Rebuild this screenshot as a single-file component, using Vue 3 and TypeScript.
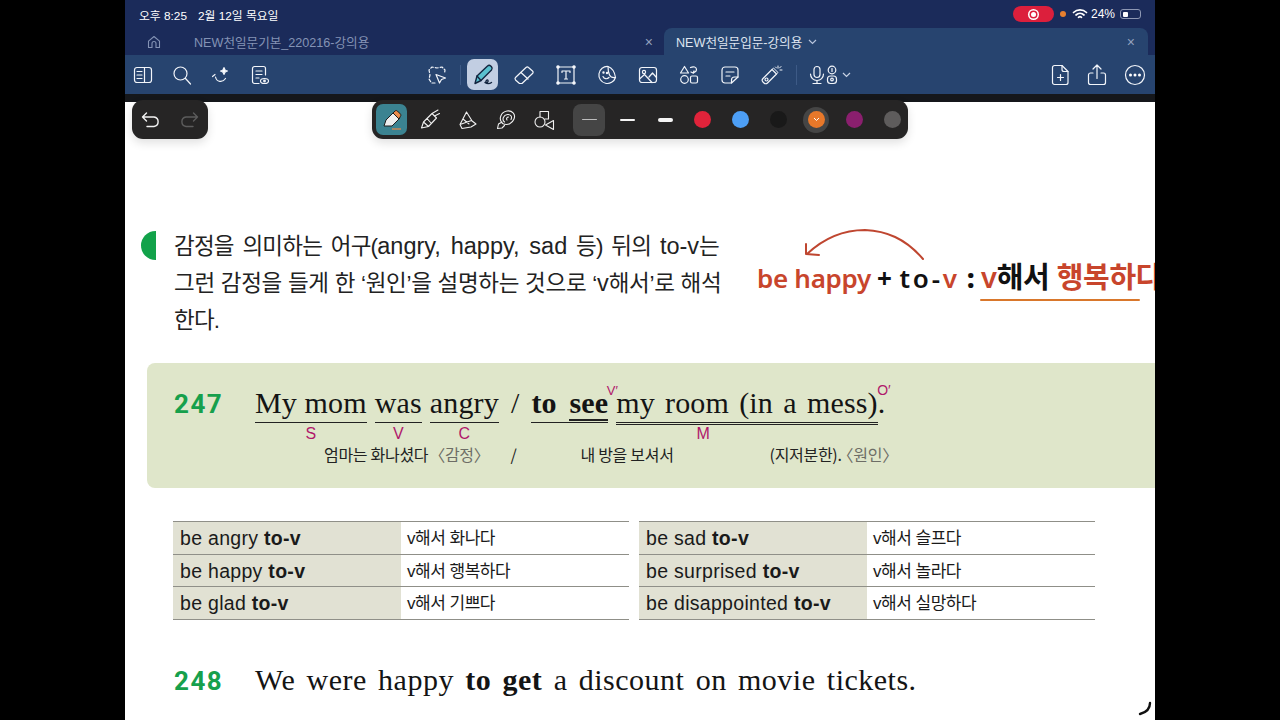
<script setup lang="ts">
interface TableRow {
  phrase: string;
  meaning: string;
}

const leftRows: TableRow[] = [
  { phrase: 'be angry', meaning: 'v해서 화나다' },
  { phrase: 'be happy', meaning: 'v해서 행복하다' },
  { phrase: 'be glad', meaning: 'v해서 기쁘다' },
];

const rightRows: TableRow[] = [
  { phrase: 'be sad', meaning: 'v해서 슬프다' },
  { phrase: 'be surprised', meaning: 'v해서 놀라다' },
  { phrase: 'be disappointed', meaning: 'v해서 실망하다' },
];

const tables = [leftRows, rightRows];
const colors = ['#e0233a', '#4d9ff6', '#191919', '#e8782a', '#8a1f6e', '#5e5c5c'];
</script>

<template>
  <div class="stage">
    <header class="chrome">
      <div class="status">
        <div class="status__time"><span>오후 8:25</span><span>2월 12일 목요일</span></div>
        <div class="status__right">
          <span class="rec"><span class="rec__dot"></span></span>
          <span class="orange-dot"></span>
          <svg width="16" height="12" viewBox="0 0 16 12" fill="none" stroke="#fff" stroke-width="1.7" stroke-linecap="round">
            <path d="M1.5 4.5a9.5 9.5 0 0 1 13 0" />
            <path d="M4 7a6 6 0 0 1 8 0" />
            <path d="M6.5 9.3a2.4 2.4 0 0 1 3 0" />
          </svg>
          <span class="status__pct">24%</span>
          <span class="battery"><span class="battery__fill"></span></span>
        </div>
      </div>

      <div class="tabs">
        <div class="tabs__home">
          <svg width="14" height="14" viewBox="0 0 14 14" fill="none" stroke="#8493b5" stroke-width="1.1">
            <path d="M1.5 6.2 7 1.5l5.500 4.700V12.500H9V8.500a2 2 0 0 0-4 0v4H1.500z" stroke-linejoin="round" />
          </svg>
        </div>
        <div class="tab tab--idle">
          <span>NEW천일문기본_220216-강의용</span>
          <span class="tab__close">×</span>
        </div>
        <div class="tab tab--active">
          <span>NEW천일문입문-강의용</span>
          <svg class="tab__chevron" width="9" height="6" viewBox="0 0 9 6" fill="none" stroke="#b8c4dc" stroke-width="1.2"><path d="m1 1 3.500 3.500L8 1" /></svg>
          <span class="tab__close tab__close--end">×</span>
        </div>
      </div>

      <div class="toolbar">
        <div class="toolbar__group toolbar__group--left">
          <svg width="20" height="20" viewBox="0 0 20 20" class="ic"><rect x="1.500" y="2.500" width="17" height="15" rx="2.500" /><path d="M11.500 2.500v15M4 6.500h5M4 10h5M4 13.500h5" /></svg>
          <svg width="20" height="20" viewBox="0 0 20 20" class="ic"><circle cx="8.500" cy="8.500" r="6.500" /><path d="m13.500 13.500 5 5.500" /></svg>
          <svg width="20" height="20" viewBox="0 0 20 20" class="ic"><path d="M1.500 11.500 4 9.500m.5 2.500c1 5 7 6 10 1.500" /><path d="M13 2.500c.4 2.300 1.200 3.100 3.500 3.500-2.300.4-3.100 1.200-3.500 3.500-.4-2.300-1.200-3.100-3.500-3.500 2.300-.4 3.100-1.200 3.500-3.500z" fill="#fff" /></svg>
          <svg width="20" height="20" viewBox="0 0 20 20" class="ic"><path d="M9 18.500H4.500a2 2 0 0 1-2-2v-13a2 2 0 0 1 2-2h9a2 2 0 0 1 2 2V10" /><path d="M6 6h6M6 9.500h6M6 13h3" /><ellipse cx="14.500" cy="16" rx="4" ry="2.500" /><circle cx="14.500" cy="16" r=".8" fill="#fff" /></svg>
        </div>

        <div class="toolbar__group toolbar__group--center">
          <svg width="20" height="20" viewBox="0 0 20 20" class="ic"><path d="M8 18H4.500L2 14l1-4-1-5 3-3 5 1 5-1 3 3-.5 3.500" stroke-dasharray="3 2" /><path d="m9 9.500 9.500 3.500-4 1.500-2 3.500z" /></svg>
          <span class="divider"></span>
          <span class="pen-btn">
            <svg width="24" height="24" viewBox="0 0 24 24" fill="none" stroke="#14253f" stroke-width="1.400" stroke-linejoin="round" stroke-linecap="round">
              <path d="M4 20.500 6 13 16.500 3c1-1 2.200-1 3.200 0l.8.800c.9 1 .9 2.200 0 3.200L10 17.500z" fill="#5bc1cf" />
              <path d="M6 13l4 4.500M14 19.500c1.500 1.500 3.500-.5 3-2-.6-1.500-2.500 0-2 2 .5 1.500 3.500 1.500 5.500 0" />
            </svg>
          </span>
          <svg width="22" height="20" viewBox="0 0 22 20" class="ic"><path d="M2.500 12.500 13 2.500c.8-.7 1.800-.7 2.500 0l4 3.500c.8.800.8 1.800 0 2.500L9 18.500H6.500L2.500 15c-.6-.8-.6-1.800 0-2.500z" /><path d="m8 7.500 7 6.500" /></svg>
          <svg width="20" height="20" viewBox="0 0 20 20" class="ic"><rect x="2" y="2" width="16" height="16" /><path d="M6 6h8M6 6v1.500M14 6v1.500M10 6v8M8.500 14h3" /><g fill="#fff"><circle cx="2" cy="2" r="1.200" /><circle cx="18" cy="2" r="1.200" /><circle cx="2" cy="18" r="1.200" /><circle cx="18" cy="18" r="1.200" /></g></svg>
          <svg width="20" height="20" viewBox="0 0 20 20" class="ic"><path d="M11 1.500a8.500 8.500 0 1 0 7.500 11c-3.500.5-5-.5-6-2.500s-1.500-5-1.500-8.500z" /><path d="M11 1.500c3 1 6.500 4.500 7.500 11" /><path d="M6 11.500c1 2.500 4 3 6 1" /><circle cx="6.500" cy="7.500" r=".6" fill="#fff" /><circle cx="10" cy="8" r=".6" fill="#fff" /></svg>
          <svg width="20" height="20" viewBox="0 0 20 20" class="ic"><rect x="1.500" y="2.500" width="17" height="15" rx="2.500" /><circle cx="6" cy="7" r="1.600" /><path d="m1.500 14 5-4.500 7.500 8M11 12l3.500-4 4 4.500" /></svg>
          <svg width="20" height="20" viewBox="0 0 20 20" class="ic"><path d="m5.500 1.500 4 6.500h-8zM11.500 2.500c3-1.500 6-.5 6 2s-2 2.500-3 3.500M15 6l-1 2-2-1" /><circle cx="5.500" cy="14.500" r="3.800" /><rect x="11.500" y="11" width="7" height="7" rx="1.500" /></svg>
          <svg width="20" height="20" viewBox="0 0 20 20" class="ic"><path d="M11.500 18H5a3 3 0 0 1-3-3V5a3 3 0 0 1 3-3h10a3 3 0 0 1 3 3v7z" /><path d="M6 7h8M6 11h4M18 12h-3.500a3 3 0 0 0-3 3v3" /></svg>
          <svg width="22" height="20" viewBox="0 0 22 20" class="ic"><path d="m2 13.500 9-9 4.500 4.500-9 9c-1 1-2.500 1-3.500 0l-1-1c-1-1-1-2.500 0-3.500z" /><circle cx="5.500" cy="14.500" r="1.500" /><path d="m11 4.500 1.500-1.500 4.500 4.500L15.500 9M17 1v2M20 1.500l-1.500 1.500M21 5h-2M14.500 2l1 1" stroke-width="1" /></svg>
          <span class="divider"></span>
          <span class="mic">
            <svg width="30" height="20" viewBox="0 0 30 20" class="ic"><rect x="5" y="1.500" width="6" height="11" rx="3" /><path d="M1.500 9a6.500 6.500 0 0 0 13 0M8 15.500V18M4 18.500h8" /><circle cx="23" cy="5" r="3.800" /><path d="M23 3.500v3" /><rect x="18.500" y="11" width="9" height="7.500" rx="3" /><circle cx="23" cy="14.500" r="1.300" /></svg>
            <svg width="9" height="6" viewBox="0 0 9 6" fill="none" stroke="#c8d2e4" stroke-width="1.200"><path d="m1 1 3.500 3.500L8 1" /></svg>
          </span>
        </div>

        <div class="toolbar__group toolbar__group--right">
          <svg width="20" height="22" viewBox="0 0 20 22" class="ic"><path d="M4.500 1.500H12l6 6v11a2 2 0 0 1-2 2H4.500a2 2 0 0 1-2-2v-15a2 2 0 0 1 2-2z" /><path d="M12 1.500v4a2 2 0 0 0 2 2h4M10.500 10.500v6M7.500 13.500h6" /></svg>
          <svg width="20" height="22" viewBox="0 0 20 22" class="ic"><path d="M6 9H3.500a2 2 0 0 0-2 2v7.500a2 2 0 0 0 2 2h13a2 2 0 0 0 2-2V11a2 2 0 0 0-2-2H14M10 14.500V1.500M6 5l4-4 4 4" /></svg>
          <svg width="22" height="22" viewBox="0 0 22 22" class="ic"><circle cx="11" cy="11" r="9.500" /><g fill="#fff" stroke="none"><circle cx="6.500" cy="11" r="1.500" /><circle cx="11" cy="11" r="1.500" /><circle cx="15.500" cy="11" r="1.500" /></g></svg>
        </div>
      </div>
      <div class="band"></div>
    </header>

    <main class="page">
      <div class="float float--history">
        <svg width="20" height="16" viewBox="0 0 20 16" fill="none" stroke="#f2f2f2" stroke-width="1.400" stroke-linecap="round" stroke-linejoin="round"><path d="M5.500 1 1.500 5l4 4M1.500 5H13a4.800 4.800 0 0 1 0 9.500H6" /></svg>
        <svg width="20" height="16" viewBox="0 0 20 16" fill="none" stroke="#5c5c5c" stroke-width="1.400" stroke-linecap="round" stroke-linejoin="round"><path d="m14.500 1 4 4-4 4M18.500 5H7a4.800 4.800 0 0 0 0 9.500h7" /></svg>
      </div>

      <div class="float float--tools">
        <span class="tool tool--active">
          <svg width="24" height="24" viewBox="0 0 24 24" fill="none" stroke="#1c1c1c" stroke-width="1" stroke-linejoin="round">
            <path d="m4 18 2-6 8-8 6 6-8 8z" fill="#eee" />
            <path d="m14 4 2-2c.8-.6 1.700-.6 2.400 0l3 3c.6.7.6 1.600 0 2.400L20 10z" transform="translate(-1 1)" fill="#e98a4a" />
            <path d="M12 21h9" stroke="#e98a4a" stroke-width="1.200" />
          </svg>
        </span>
        <span class="tool">
          <svg width="22" height="22" viewBox="0 0 22 22" class="ic-w"><path d="m2.500 19 2-6L13 4.500l4.500 4.500-8 8.500zM4.500 13l5 4.500M8 9.500l4 4.500M13 4.500 19 1M15.500 7l5-2.500" /></svg>
        </span>
        <span class="tool">
          <svg width="22" height="22" viewBox="0 0 22 22" class="ic-w"><path d="M3 15.500 9.500 3M9.500 3l5 8M3 15.500l2 4 9-1.500 5-3-4.500-3.500zM6 10l6 5" /></svg>
        </span>
        <span class="tool">
          <svg width="22" height="22" viewBox="0 0 22 22" class="ic-w"><path d="m7 13-3.500 2-1 4.500 4.500-.5 2.500-2.500" /><path d="M7.500 14.500C3 10 6 3 12 2c5-.8 9 3 7 8-1.500 4-6 7-11.500 4.500z" /><path d="M9.500 13c-3-2.500-1-7 3-7.500 3-.3 5 2 3.500 5M12 11c-1-1.500 0-3 1.500-3" /></svg>
        </span>
        <span class="tool tool--last">
          <svg width="22" height="22" viewBox="0 0 22 22" class="ic-w"><circle cx="7" cy="13" r="5" /><path d="M7 8V2.500h8.500V10H12" /><path d="m20.500 11.500-8 4.500 8 4.500z" /></svg>
        </span>
        <span class="dash dash--active"><i class="dash__line dash__line--thin"></i></span>
        <span class="dash"><i class="dash__line dash__line--mid"></i></span>
        <span class="dash dash--last"><i class="dash__line dash__line--bold"></i></span>
        <span v-for="c in colors" :key="c" class="swatch" :class="{ 'swatch--on': c === '#e8782a' }">
          <i class="swatch__dot" :style="{ background: c }">
            <svg v-if="c === '#e8782a'" width="7" height="5" viewBox="0 0 7 5" fill="none" stroke="#fff" stroke-width="1"><path d="m1 1 2.500 2.500L6 1" /></svg>
          </i>
        </span>
      </div>

      <section class="intro">
        <span class="intro__mark"></span>
        <div class="intro__text">
          <div class="intro__line intro__line--first">감정을 의미하는 어구(<span class="latin">angry, happy, sad</span> 등) 뒤의 <span class="latin">to-v</span>는</div>
          <div class="intro__line intro__line--wide">그런 감정을 들게 한 ‘원인’을 설명하는 것으로 ‘<span class="latin">v</span>해서’로 해석</div>
          <div class="intro__line">한다.</div>
        </div>
        <div class="note">
          <svg class="note__arrow" width="130" height="40" viewBox="0 0 130 40" fill="none" stroke="#bf4630" stroke-width="2" stroke-linecap="round" stroke-linejoin="round">
            <path d="M122 33C104 12 85 5 64 4 42 4 22 13 6 28" />
            <path d="M5 18 5 28 18 29" />
          </svg>
          <div class="note__text">
            <span class="red">be happy</span><b class="note__plus">+</b><span class="note__tov">to-<span class="red">v</span></span><b class="note__colon">:</b><span class="note__under"><span class="red">v</span>해서 <span class="red">행복하다</span></span>
          </div>
        </div>
      </section>

      <section class="example">
        <div class="example__row">
          <span class="num">247</span>
          <div class="sentence">
            <span class="seg">My mom<i class="lab lab--s">S</i></span>
            <span class="seg">was<i class="lab">V</i></span>
            <span class="seg">angry<i class="lab">C</i></span>
            <span class="slash">/</span>
            <span class="seg seg--bold"><b>to <span class="see">see</span></b><i class="lab lab--small lab--v2">V′</i></span>
            <span class="seg seg--double">my room (in a mess)<i class="lab lab--m">M</i><i class="lab lab--small lab--o2">O′</i></span><span class="dot">.</span>
          </div>
        </div>
        <div class="gloss">
          <span class="gloss__a">엄마는 화나셨다</span>
          <span class="gray gloss__b">〈감정〉</span>
          <span class="gloss__c">/</span>
          <span class="gloss__d">내 방을 보셔서</span>
          <span class="gloss__e">(지저분한).</span>
          <span class="gray gloss__f">〈원인〉</span>
        </div>
      </section>

      <section class="tables">
        <div v-for="(rows, i) in tables" :key="i" class="table">
          <div v-for="row in rows" :key="row.phrase" class="table__row">
            <div class="table__phrase">{{ row.phrase }} <b>to-v</b></div>
            <div class="table__meaning">{{ row.meaning }}</div>
          </div>
        </div>
      </section>

      <section class="next">
        <span class="num">248</span>
        <span class="next__text">We were happy <b>to get</b> a discount on movie tickets.</span>
      </section>

      <svg class="scribble" width="16" height="16" viewBox="0 0 16 16" fill="none" stroke="#111" stroke-width="2.400" stroke-linecap="round"><path d="M13 2c0 5-2 9-10 11" /></svg>
    </main>
  </div>
</template>

<style>
html,
body {
  margin: 0;
  background: #000;
}
</style>

<style scoped>
.stage {
  width: 1030px;
  height: 720px;
  margin-left: 125px;
  overflow: hidden;
  background: #fff;
  font-family: "Liberation Sans", "Noto Sans CJK KR", sans-serif;
  color: #1a1a1a;
}

/* app chrome */
.chrome {
  background: #1b2b5a;
  color: #fff;
}

.status {
  height: 28px;
  display: flex;
  align-items: center;
  justify-content: space-between;
  padding: 0 14px;
  font-size: 11.800px;
}

.status__time {
  display: flex;
  gap: 11px;
}

.status__right {
  display: flex;
  align-items: center;
}

.rec {
  width: 41px;
  height: 16px;
  border-radius: 8px;
  background: #dc1f3c;
  display: flex;
  align-items: center;
  justify-content: center;
}

.rec__dot {
  width: 5px;
  height: 5px;
  border-radius: 50%;
  background: #fff;
  box-shadow: 0 0 0 1.500px #dc1f3c, 0 0 0 3px #fff;
}

.orange-dot {
  width: 6px;
  height: 6px;
  margin: 0 6px 0 6px;
  border-radius: 50%;
  background: #e8802f;
}

.status__pct {
  margin-left: 3px;
  font-size: 12px;
}

.battery {
  width: 21px;
  height: 10px;
  margin-left: 5px;
  padding: 1.500px;
  box-sizing: border-box;
  border: 1px solid #8d97b3;
  border-radius: 3px;
}

.battery__fill {
  display: block;
  width: 5px;
  height: 100%;
  border-radius: 1px;
  background: #fff;
}

.tabs {
  height: 27px;
  display: flex;
  align-items: stretch;
  font-size: 12.600px;
}

.tabs__home {
  width: 58px;
  display: flex;
  align-items: center;
  padding-left: 22px;
  box-sizing: border-box;
}

.tab {
  display: flex;
  align-items: center;
}

.tab--idle {
  width: 481px;
  padding-left: 11px;
  padding-right: 11px;
  box-sizing: border-box;
  justify-content: space-between;
  color: #8493b5;
}

.tab--active {
  width: 484px;
  padding: 0 12px;
  box-sizing: border-box;
  background: #27446f;
  border-radius: 8px 8px 0 0;
  color: #dfe5f0;
}

.tab__chevron {
  margin-left: 6px;
}

.tab__close {
  font-size: 14px;
  color: #93a1bd;
}

.tab__close--end {
  margin-left: auto;
  margin-right: 1px;
}

.toolbar {
  height: 39px;
  background: #27446f;
  display: flex;
  align-items: center;
  padding: 0 9px 0 8px;
}

.toolbar__group {
  display: flex;
  align-items: center;
}

.toolbar__group--left {
  gap: 19px;
}

.toolbar__group--center {
  gap: 21px;
  margin-left: 157px;
}

.toolbar__group--right {
  gap: 17px;
  margin-left: auto;
}

.ic {
  fill: none;
  stroke: #f2f5fa;
  stroke-width: 1.200;
  stroke-linecap: round;
  stroke-linejoin: round;
}

.divider {
  width: 1px;
  height: 20px;
  margin: 0 -9px 0 -8px;
  background: #3d5a86;
}

.pen-btn {
  width: 31px;
  height: 31px;
  margin: 0 -6px;
  border-radius: 7px;
  background: #c2cee2;
  display: flex;
  align-items: center;
  justify-content: center;
}

.mic {
  display: flex;
  align-items: center;
  gap: 3px;
}

.band {
  height: 8px;
  background: #15171b;
}

/* page */
.page {
  position: relative;
  height: 618px;
  padding-top: 126px;
  box-sizing: border-box;
}

.float {
  position: absolute;
  top: -2px;
  height: 39px;
  display: flex;
  align-items: center;
  background: #262525;
  border-radius: 11px;
  box-shadow: 0 4px 10px rgba(0, 0, 0, 0.12);
}

.float--history {
  left: 7px;
  width: 76px;
  gap: 18px;
  justify-content: center;
}

.float--tools {
  left: 247px;
  width: 536px;
  padding-left: 4px;
  box-sizing: border-box;
}

.tool {
  flex: none;
  width: 31px;
  height: 31px;
  margin-right: 7px;
  display: flex;
  align-items: center;
  justify-content: center;
}

.tool--last {
  margin-right: 14px;
}

.tool--active {
  background: #3b8391;
  border-radius: 7px;
}

.ic-w {
  fill: none;
  stroke: #f0f0f0;
  stroke-width: 1.100;
  stroke-linecap: round;
  stroke-linejoin: round;
}

.dash {
  flex: none;
  width: 32px;
  height: 32px;
  margin-right: 6px;
  border-radius: 8px;
  display: flex;
  align-items: center;
  justify-content: center;
}

.dash--last {
  margin-right: 8px;
}

.dash--active {
  background: #454545;
}

.dash__line {
  display: block;
  width: 15px;
  background: #f4f4f4;
  border-radius: 2px;
}

.dash__line--thin {
  height: 1px;
  background: #bdbdbd;
}

.dash__line--mid {
  height: 2px;
}

.dash__line--bold {
  height: 4px;
}

.swatch {
  flex: none;
  width: 26px;
  height: 26px;
  margin-right: 12px;
  border-radius: 50%;
  display: flex;
  align-items: center;
  justify-content: center;
}

.swatch:last-child {
  margin-right: 0;
}

.swatch--on {
  background: #454545;
}

.swatch__dot {
  width: 17px;
  height: 17px;
  border-radius: 50%;
  display: flex;
  align-items: center;
  justify-content: center;
}

/* intro */
.intro {
  display: flex;
  height: 111px;
  padding-left: 16px;
}

.intro__mark {
  flex: none;
  width: 15px;
  height: 29px;
  margin-top: 3px;
  border-radius: 15px 0 0 15px;
  background: #12a24a;
}

.intro__text {
  flex: none;
  margin-left: 18px;
  width: 547px;
  font-size: 22.500px;
  line-height: 37px;
  letter-spacing: -0.8px;
  white-space: nowrap;
  color: #222;
}

.intro__line--first {
  word-spacing: 3.300px;
}

.intro__line--wide {
  letter-spacing: -0.3px;
}

.latin {
  font-size: 23.500px;
  letter-spacing: 0;
}

.note {
  position: relative;
  margin-left: 36px;
  padding-top: 31px;
  white-space: nowrap;
}

.note__arrow {
  position: absolute;
  top: -2px;
  left: 44px;
}

.note__text {
  font-family: "Noto Sans", "Noto Sans CJK KR", sans-serif;
  font-size: 26px;
  line-height: 36px;
  font-weight: 600;
  letter-spacing: -0.3px;
  color: #111;
}

.red {
  color: #c8452c;
}

.note__plus {
  margin: 0 8px 0 6px;
  font-weight: 700;
}

.note__tov {
  letter-spacing: 2.800px;
}

.note__colon {
  margin: 0 7px;
}

.note__under {
  position: relative;
  display: inline-block;
  font-size: 29px;
}

.note__under::after {
  content: "";
  position: absolute;
  left: -1px;
  top: 40px;
  width: 160px;
  height: 2px;
  border-radius: 1px;
  background: #d9772b;
}

/* example box */
.example {
  margin: 24px 0 0 22px;
  height: 125px;
  padding: 21px 0 0 27px;
  box-sizing: border-box;
  background: #dfe6ca;
  border-radius: 8px 0 0 8px;
}

.example__row {
  display: flex;
  align-items: baseline;
}

.num {
  width: 81px;
  flex: none;
  font-family: "Roboto", sans-serif;
  font-weight: 700;
  font-size: 26px;
  letter-spacing: 1.500px;
  color: #16a04c;
}

.sentence {
  display: flex;
  align-items: baseline;
  font-family: "Liberation Serif", serif;
  font-size: 30px;
  line-height: 38px;
  letter-spacing: 0.15px;
  white-space: nowrap;
  color: #141414;
}

.seg {
  position: relative;
  margin-right: 8px;
  border-bottom: 1px solid #222;
}

.seg--bold {
  word-spacing: 5px;
}

.seg--double {
  margin-right: 0;
  word-spacing: 2.600px;
  border-bottom: 3px double #222;
}

.see {
  border-bottom: 2px solid #222;
}

.slash {
  margin: 0 12px 0 4px;
}

.lab {
  position: absolute;
  top: 42px;
  left: 50%;
  transform: translateX(-50%);
  font-family: "Liberation Sans", sans-serif;
  font-size: 16px;
  line-height: 16px;
  font-style: normal;
  font-weight: 400;
  letter-spacing: 0;
  word-spacing: 0;
  color: #b0186a;
}

.lab--m {
  left: 87px;
}

.lab--small {
  font-size: 14px;
  top: -1px;
}

.lab--v2 {
  left: 81px;
  font-size: 13px;
}

.lab--o2 {
  left: auto;
  right: -13px;
  top: -2px;
  transform: none;
}

.gloss {
  display: flex;
  margin-top: 19px;
  font-family: "Noto Sans CJK KR", sans-serif;
  font-size: 16px;
  line-height: 20px;
  letter-spacing: -0.3px;
  white-space: pre;
  color: #222;
}

.gray {
  color: #6d6d66;
}

.gloss__a {
  margin-left: 150px;
}

.gloss__b {
  margin-left: 1px;
}

.gloss__c {
  margin-left: 21px;
}

.gloss__d {
  margin-left: 64px;
}

.gloss__e {
  margin-left: 96px;
}

.gloss__f {
  margin-left: -4px;
}

/* tables */
.tables {
  display: flex;
  gap: 10px;
  margin: 33px 0 0 48px;
}

.table {
  width: 456px;
  border-top: 1px solid #8f8f88;
}

.table__row {
  height: 31.700px;
  display: flex;
  border-bottom: 1px solid #8f8f88;
  font-size: 19.500px;
  line-height: 32px;
  letter-spacing: 0.3px;
}

.table__phrase {
  width: 228px;
  padding-left: 7px;
  box-sizing: border-box;
  background: #e1e1d3;
}

.table__meaning {
  padding: 1px 0 0 6px;
  font-size: 17px;
  letter-spacing: -0.5px;
}

/* next example */
.next {
  display: flex;
  align-items: baseline;
  margin: 41px 0 0 49px;
}

.next__text {
  font-family: "Liberation Serif", serif;
  font-size: 30px;
  line-height: 38px;
  letter-spacing: 0.5px;
  word-spacing: 3.300px;
  white-space: nowrap;
  color: #141414;
}

.scribble {
  position: absolute;
  right: 2px;
  bottom: 3px;
}
</style>
